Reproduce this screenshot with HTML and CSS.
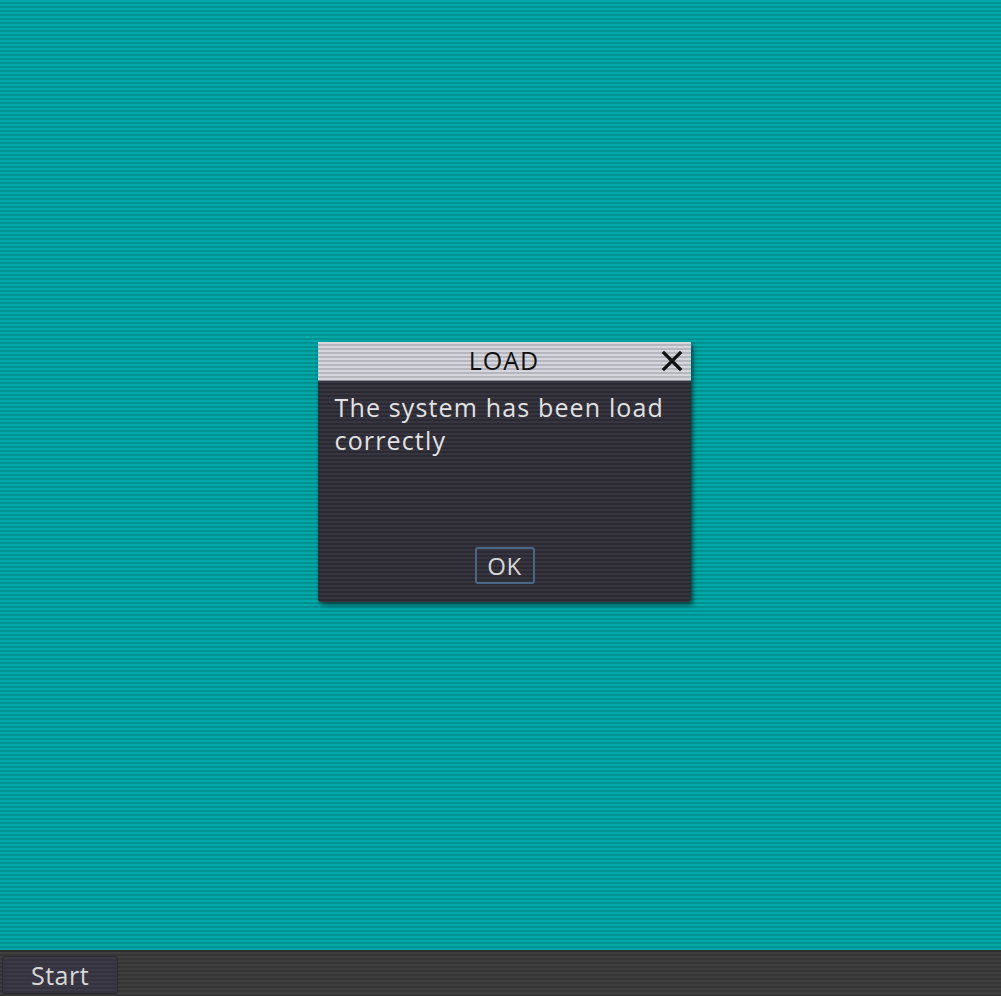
FILE: index.html
```html
<!DOCTYPE html>
<html>
<head>
<meta charset="utf-8">
<link rel="stylesheet" href="styles.css">
</head>
<body>
<div class="desktop">
  <div class="dialog">
    <div class="titlebar">
      <span class="title">LOAD</span>
      <svg class="close" width="22" height="22" viewBox="0 0 22 22"><path d="M3 3 L19 19 M19 3 L3 19" stroke="#111" stroke-width="3.2" stroke-linecap="square"/></svg>
    </div>
    <div class="body">
      <p class="message">The system has been load correctly</p>
      <div class="actions"><button class="ok">OK</button></div>
    </div>
  </div>
</div>
<div class="taskbar">
  <button class="start">Start</button>
</div>
</body>
</html>
```
FILE: styles.css
```css
html, body {
  margin: 0;
  padding: 0;
  height: 100%;
  overflow: hidden;
}
body {
  display: flex;
  flex-direction: column;
  font-family: "Open Sans", "DejaVu Sans", sans-serif;
}
.desktop {
  flex: 1;
  display: flex;
  align-items: center;
  justify-content: center;
  background: repeating-linear-gradient(to bottom, #00a8a8 0px, #00a8a8 2px, #009191 2px, #009191 4px);
}
.dialog {
  width: 373px;
  height: 260px;
  display: flex;
  flex-direction: column;
  margin-bottom: 6px;
  margin-left: 7px;
  box-shadow: 2px 3px 4px rgba(0,0,0,0.55);
  border-radius: 0 0 3px 3px;
}
.titlebar {
  height: 38px;
  position: relative;
  display: flex;
  align-items: center;
  justify-content: center;
  background: repeating-linear-gradient(to bottom, #d6d6dc 0px, #d6d6dc 2px, #b5b5bd 2px, #b5b5bd 4px);
  border-bottom: 1px solid #8a8a92;
}
.title {
  font-size: 25px;
  line-height: 30px;
  color: #111;
  letter-spacing: 1px;
  margin-top: -2px;
}
.close {
  position: absolute;
  right: 8px;
  top: 8px;
}
.body {
  flex: 1;
  display: flex;
  flex-direction: column;
  padding: 10px 16px 18px 17px;
  background: repeating-linear-gradient(to bottom, #37353f 0px, #37353f 2px, #2b2931 2px, #2b2931 4px);
  border-radius: 0 0 3px 3px;
}
.message {
  margin: 0;
  font-size: 25px;
  line-height: 33px;
  color: #e2e2e2;
  letter-spacing: 1.15px;
  flex: 1;
}
.actions {
  display: flex;
  justify-content: center;
}
.ok {
  font-family: inherit;
  font-size: 24px;
  letter-spacing: 0.5px;
  color: #d6d6d6;
  background: transparent;
  border: 2px solid #4b6786;
  border-radius: 3px;
  width: 60px;
  height: 37px;
  padding: 0;
  line-height: 30px;
}
.taskbar {
  height: 46px;
  display: flex;
  align-items: flex-end;
  padding: 0 0 2px 2px;
  background: repeating-linear-gradient(to bottom, #3f3f3f 0px, #3f3f3f 2px, #363636 2px, #363636 4px);
  border-top: 2px solid #2e2e2e;
  box-sizing: border-box;
}
.start {
  font-family: inherit;
  width: 116px;
  height: 38px;
  font-size: 25px;
  letter-spacing: 0.5px;
  line-height: 34px;
  color: #d8d8d8;
  background: repeating-linear-gradient(to bottom, #3c3a46 0px, #3c3a46 2px, #34323c 2px, #34323c 4px);
  border: 1px solid #2a2a30;
  border-radius: 3px;
  padding: 0;
}
```
